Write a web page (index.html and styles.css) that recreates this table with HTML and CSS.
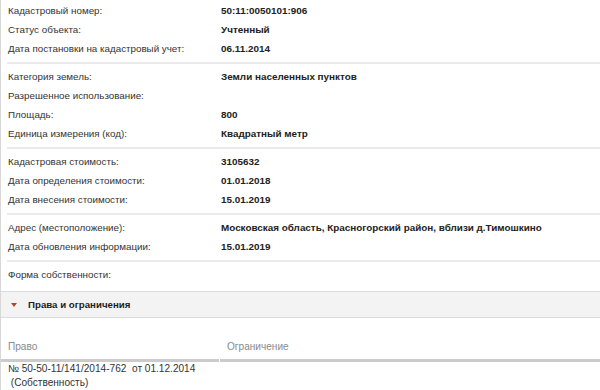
FILE: index.html
```html
<!DOCTYPE html>
<html lang="ru">
<head>
<meta charset="utf-8">
<title>Кадастровая информация</title>
<link rel="stylesheet" href="styles.css">
</head>
<body>
<div class="page">
  <div class="group first">
    <div class="row"><span class="label">Кадастровый номер:</span><span class="value">50:11:0050101:906</span></div>
    <div class="row"><span class="label">Статус объекта:</span><span class="value">Учтенный</span></div>
    <div class="row"><span class="label">Дата постановки на кадастровый учет:</span><span class="value">06.11.2014</span></div>
  </div>
  <div class="group">
    <div class="row"><span class="label">Категория земель:</span><span class="value">Земли населенных пунктов</span></div>
    <div class="row"><span class="label">Разрешенное использование:</span><span class="value"></span></div>
    <div class="row"><span class="label">Площадь:</span><span class="value">800</span></div>
    <div class="row"><span class="label">Единица измерения (код):</span><span class="value">Квадратный метр</span></div>
  </div>
  <div class="group">
    <div class="row"><span class="label">Кадастровая стоимость:</span><span class="value">3105632</span></div>
    <div class="row"><span class="label">Дата определения стоимости:</span><span class="value">01.01.2018</span></div>
    <div class="row"><span class="label">Дата внесения стоимости:</span><span class="value">15.01.2019</span></div>
  </div>
  <div class="group">
    <div class="row"><span class="label">Адрес (местоположение):</span><span class="value">Московская область, Красногорский район, вблизи д.Тимошкино</span></div>
    <div class="row"><span class="label">Дата обновления информации:</span><span class="value">15.01.2019</span></div>
  </div>
  <div class="group last">
    <div class="row"><span class="label">Форма собственности:</span><span class="value"></span></div>
  </div>
  <div class="section-head"><span class="caret"></span><span class="section-title">Права и ограничения</span></div>
  <div class="rights">
    <div class="th th-right">Право</div>
    <div class="th th-limit">Ограничение</div>
    <div class="td">№ 50-50-11/141/2014-762&nbsp; от 01.12.2014<br>&nbsp;(Собственность)</div>
    <div class="td"></div>
  </div>
</div>
</body>
</html>
```
FILE: styles.css
```css
html, body {
  margin: 0;
  padding: 0;
  background: #ffffff;
}
body {
  font-family: "Liberation Sans", Arial, sans-serif;
  font-size: 9.7px;
  color: #333333;
}
.page {
  width: 600px;
  height: 390px;
  overflow: hidden;
  border-left: 1px solid #d8d8d8;
  box-sizing: border-box;
}
.group {
  padding: 3px 0 4px;
  margin-left: 6px;
  border-bottom: 2px solid #ebebeb;
}
.group.first {
  padding-top: 1px;
}
.group.last {
  border-bottom: none;
  padding-bottom: 7px;
}
.row {
  display: flex;
  height: 19px;
  line-height: 19px;
}
.label {
  width: 213px;
  padding-left: 1px;
  flex: none;
  color: #333333;
  font-size: 9.8px;
}
.value {
  font-weight: bold;
  color: #222222;
  font-size: 9.9px;
}
.section-head {
  display: flex;
  align-items: center;
  height: 25px;
  background: #f3f3f3;
  border-top: 1px solid #dcdcdc;
  border-bottom: 1px solid #dcdcdc;
}
.caret {
  width: 0;
  height: 0;
  margin-left: 10px;
  margin-right: 11px;
  border-left: 3px solid transparent;
  border-right: 3px solid transparent;
  border-top: 4px solid #a84a2c;
}
.section-title {
  font-weight: bold;
  color: #1e1e1e;
  font-size: 9.7px;
}
.rights {
  display: grid;
  grid-template-columns: 218px 1fr;
  column-gap: 1px;
  font-size: 10.1px;
}
.th {
  padding: 22px 0 5px 7px;
  line-height: 14px;
  color: #8a8a8a;
  border-bottom: 3px solid #cbcbcb;
}
.th-limit {
  padding-left: 7px;
}
.td {
  padding: 0 0 0 7px;
  line-height: 14px;
  color: #333333;
  border-bottom: 1px solid #dedede;
}
```
